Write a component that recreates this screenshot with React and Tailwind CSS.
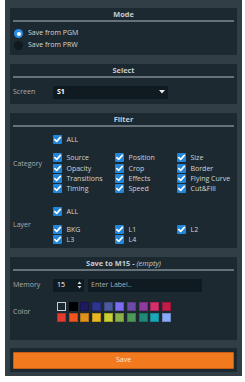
import React from 'react';

const categories = [
  'Source', 'Position', 'Size',
  'Opacity', 'Crop', 'Border',
  'Transitions', 'Effects', 'Flying Curve',
  'Timing', 'Speed', 'Cut&Fill',
];
const layers = ['BKG', 'L1', 'L2', 'L3', 'L4'];
const swatches = [
  'transparent', '#000000', '#1e1a5e', '#2e3590', '#4a5aa0', '#7c6cf2', '#6c4aa8', '#8e3a9e', '#d4306a', '#c21c48',
  '#e23c30', '#f25420', '#e0921c', '#e9b820', '#c9d132', '#8cb04a', '#4d9a58', '#1f8a78', '#19a9ba', '#88a8f8',
];

function Check() {
  return (
    <span className="w-[9px] h-[9px] rounded-[1px] bg-[#2486d9] flex items-center justify-center shrink-0">
      <svg width="9" height="9" viewBox="0 0 9 9">
        <path d="M1.8 4.6 L3.7 6.4 L7.3 2.4" stroke="#fff" strokeWidth="1.6" fill="none" strokeLinecap="round" strokeLinejoin="round" />
      </svg>
    </span>
  );
}

function CheckItem({ label }) {
  return (
    <div className="h-[10.3px] flex items-center gap-[4.5px]">
      <Check />
      <span className="text-[#cdd4d8] leading-none">{label}</span>
    </div>
  );
}

function Section({ title, className, children }) {
  return (
    <div className={`bg-[#1d2930] px-[3px] pt-[2px] ${className}`}>
      <div className="h-[10px] flex items-center justify-center text-[7.4px] font-bold text-[#c4ccd0]">{title}</div>
      <div className="h-[1.5px] bg-[#66727a]" />
      {children}
    </div>
  );
}

function Group({ label, items }) {
  return (
    <div className="flex items-center">
      <div className="w-[40px] text-[#a3adb3]">{label}</div>
      <div className="flex-1">
        <CheckItem label="ALL" />
        <div className="grid grid-cols-[62px_62px_1fr] mt-[8px]">
          {items.map((it) => (
            <CheckItem key={it} label={it} />
          ))}
        </div>
      </div>
    </div>
  );
}

export default function App() {
  return (
    <div className="min-h-screen bg-white text-[7px]" style={{ fontFamily: '"Open Sans", sans-serif' }}>
      <div className="ml-[5px] w-[237px] h-[376px] bg-[#323e46] px-[5px] pt-[8px] flex flex-col gap-[9px]">
        <Section title="Mode" className="h-[47px]">
          <div className="mt-[6px]">
            <div className="h-[12px] flex items-center gap-[5px] pl-[1px]">
              <span className="w-[9px] h-[9px] rounded-full bg-[#2a8ce6] flex items-center justify-center">
                <span className="w-[4px] h-[4px] rounded-full bg-white" />
              </span>
              <span className="text-[#d2d8dc]">Save from PGM</span>
            </div>
            <div className="h-[12px] flex items-center gap-[5px] pl-[1px]">
              <span className="w-[9px] h-[9px] rounded-full bg-[#0f1920]" />
              <span className="text-[#d2d8dc]">Save from PRW</span>
            </div>
          </div>
        </Section>

        <Section title="Select" className="h-[40px]">
          <div className="mt-[8px] flex items-center">
            <div className="w-[40px] text-[#a3adb3]">Screen</div>
            <div className="w-[115px] h-[13px] bg-[#0f1a21] rounded-[1px] flex items-center justify-between pl-[4px] pr-[3px]">
              <span className="font-bold text-white">S1</span>
              <svg width="6" height="4" viewBox="0 0 6 4">
                <path d="M0 0 H6 L3 3.5 Z" fill="#e6eaec" />
              </svg>
            </div>
          </div>
        </Section>

        <Section title="Filter" className="h-[135px]">
          <div className="mt-[8px] flex flex-col gap-[12px]">
            <Group label="Category" items={categories} />
            <Group label="Layer" items={layers} />
          </div>
        </Section>

        <Section
          title={
            <span>
              Save to M15 - <span className="italic font-normal">(empty)</span>
            </span>
          }
          className="h-[83px]"
        >
          <div className="mt-[8px] flex items-center">
            <div className="w-[40px] text-[#a3adb3]">Memory</div>
            <div className="w-[31px] h-[13px] bg-[#0f1a21] rounded-[1px] flex items-center justify-between pl-[4px] pr-[2px]">
              <span className="text-white">15</span>
              <svg width="5" height="8" viewBox="0 0 5 8">
                <path d="M0.5 3 L2.5 0.5 L4.5 3 Z M0.5 5 L2.5 7.5 L4.5 5 Z" fill="#d8dde0" />
              </svg>
            </div>
            <div className="ml-[4px] w-[114px] h-[13px] bg-[#0f1a21] rounded-[1px] flex items-center pl-[3px] text-[#aab2b8]">
              Enter Label..
            </div>
          </div>
          <div className="mt-[10px] flex items-center">
            <div className="w-[40px] text-[#a3adb3]">Color</div>
            <div className="ml-[4px] grid grid-cols-[repeat(10,9px)] gap-x-[2.67px] gap-y-[2.5px]">
              {swatches.map((c, i) => (
                <span
                  key={i}
                  className={`w-[9px] h-[9px] ${i === 0 ? 'border border-[#c8cdd0]' : 'border border-black/20'}`}
                  style={{ backgroundColor: c }}
                />
              ))}
            </div>
          </div>
        </Section>

        <div className="mt-[-1px] h-[24px] bg-[#1d2930] px-[3px] pt-[4px] pb-[3px]">
          <div className="h-full bg-[#f27a1e] border border-[#c85c12] rounded-[1px] flex items-center justify-center text-[#fbe9dc]">
            Save
          </div>
        </div>
      </div>
    </div>
  );
}
